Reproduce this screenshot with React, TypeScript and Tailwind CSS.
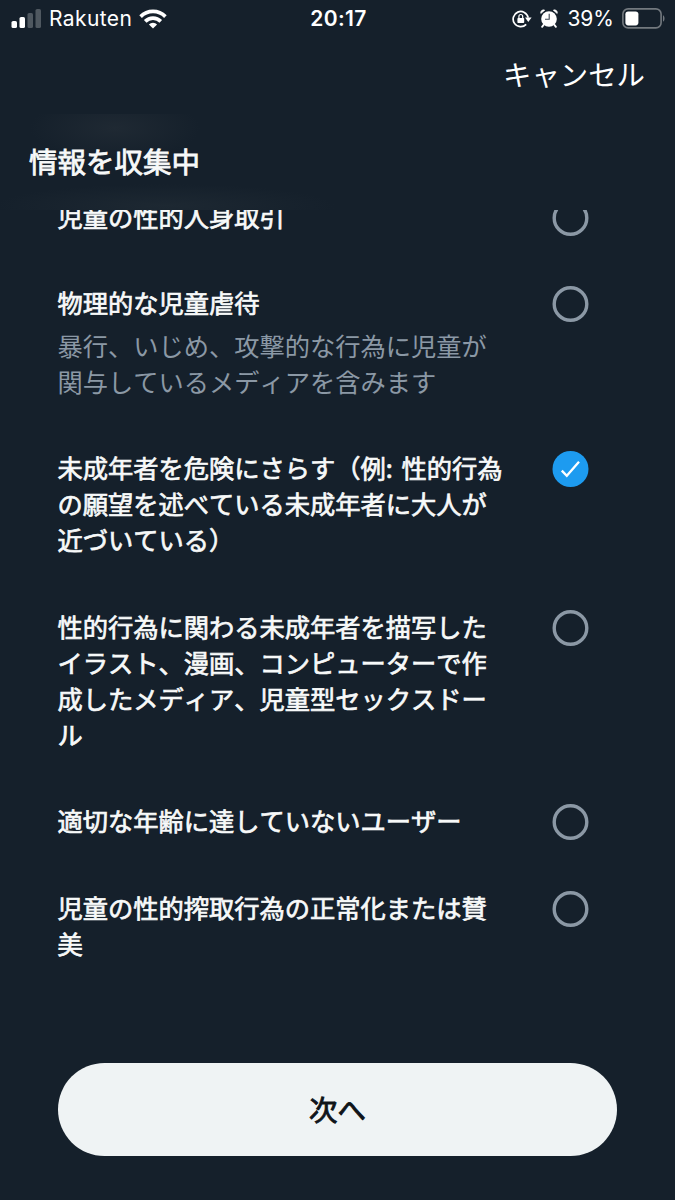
import { useState } from 'react';

interface ReportOption {
	id: string;
	label: string;
	description?: string;
}

const OPTIONS: ReportOption[] = [
	{ id: 'trafficking', label: '児童の性的人身取引' },
	{
		id: 'physical-abuse',
		label: '物理的な児童虐待',
		description: '暴行、いじめ、攻撃的な行為に児童が関与しているメディアを含みます',
	},
	{ id: 'endangering', label: '未成年者を危険にさらす（例: 性的行為の願望を述べている未成年者に大人が近づいている）' },
	{ id: 'depiction', label: '性的行為に関わる未成年者を描写したイラスト、漫画、コンピューターで作成したメディア、児童型セックスドール' },
	{ id: 'underage', label: '適切な年齢に達していないユーザー' },
	{ id: 'normalizing', label: '児童の性的搾取行為の正常化または賛美' },
];

function SignalIcon() {
	return (
		<svg width="31" height="20" viewBox="0 0 31 20" fill="#fff">
			<rect x="0.5" y="12" width="5.5" height="7" rx="1.6" />
			<rect x="8.5" y="8" width="5.5" height="11" rx="1.6" />
			<rect x="16.5" y="4" width="5.5" height="15" rx="1.6" opacity="0.25" />
			<rect x="24.5" y="0" width="5.5" height="19" rx="1.6" opacity="0.25" />
		</svg>
	);
}

function WifiIcon() {
	return (
		<svg width="28" height="20" viewBox="0 0 28 20" fill="none" stroke="#fff" strokeWidth="3.7">
			<path d="M1.6 7.6a17.5 17.5 0 0 1 24.8 0" />
			<path d="M6.2 12.4a11 11 0 0 1 15.6 0" />
			<path d="M14 19.6l-4.1-4.1a5.8 5.8 0 0 1 8.2 0z" fill="#fff" stroke="none" />
		</svg>
	);
}

function RotationLockIcon() {
	return (
		<svg width="20" height="18" viewBox="0 0 20 18" fill="none" stroke="#fff" strokeWidth="1.7">
			<path d="M16.2 7.6A7.6 7.6 0 1 0 14.2 14.4" />
			<path d="M13 7.6h6.6l-3.3 4.3z" fill="#fff" stroke="none" />
			<rect x="5.4" y="8" width="6.8" height="5" rx="0.8" fill="#fff" stroke="none" />
			<path d="M6.9 8.5V6.4a1.9 1.9 0 0 1 3.8 0v2.1" strokeWidth="1.2" />
		</svg>
	);
}

function AlarmIcon() {
	return (
		<svg width="18" height="19" viewBox="0 0 18 19">
			<circle cx="9" cy="10" r="7.8" fill="#fff" />
			<path d="M0.8 4.6A2.8 2.8 0 0 1 4.8 1.2zM17.2 4.6A2.8 2.8 0 0 0 13.2 1.2z" fill="#fff" stroke="#fff" strokeWidth="0.6" />
			<path d="M3.6 15.9l-1.5 2M14.4 15.9l1.5 2" stroke="#fff" strokeWidth="1.8" strokeLinecap="round" />
			<path d="M9.2 4.8v5.4H5" fill="none" stroke="#3d4650" strokeWidth="1.1" />
		</svg>
	);
}

function BatteryIcon() {
	return (
		<svg width="44" height="21" viewBox="0 0 44 21">
			<rect x="0.9" y="0.9" width="38.2" height="19" rx="5.2" fill="none" stroke="#73797f" strokeWidth="1.6" />
			<rect x="3.4" y="3.4" width="13" height="14" rx="2.8" fill="#fff" />
			<path d="M41 7.2c2 .8 2 5.6 0 6.4z" fill="#73797f" />
		</svg>
	);
}

function StatusBar() {
	return (
		<div className="flex h-[37px] shrink-0 items-center pl-[11px] pr-[9px] font-['Inter','Liberation_Sans',sans-serif] text-white">
			<div className="flex flex-1 items-center">
				<SignalIcon />
				<span className="ml-[7px] w-[83px] text-[21px] tracking-[0.35px]">Rakuten</span>
				<span className="ml-[7px]">
					<WifiIcon />
				</span>
			</div>
			<span className="text-[21px] font-semibold tracking-[0.4px]">20:17</span>
			<div className="flex flex-1 items-center justify-end">
				<RotationLockIcon />
				<span className="ml-2">
					<AlarmIcon />
				</span>
				<span className="ml-[9px] text-[21px]">39%</span>
				<span className="ml-2">
					<BatteryIcon />
				</span>
			</div>
		</div>
	);
}

function Radio({ checked }: Readonly<{ checked: boolean }>) {
	return (
		<svg width="37" height="36" viewBox="0 0 37 36" fill="none">
			{checked ? (
				<>
					<circle cx="18.5" cy="18" r="18" fill="#1d9bf0" />
					<path d="M9.8 19.6l5 5.2L27 10.7" stroke="#fff" strokeWidth="2.3" />
				</>
			) : (
				<circle cx="18.5" cy="18" r="16.3" stroke="#8b98a5" strokeWidth="3.4" />
			)}
		</svg>
	);
}

export default function App() {
	const [selected, setSelected] = useState('endangering');

	return (
		<div className="flex h-[1200px] w-[675px] flex-col overflow-hidden bg-[#15202b] font-['Noto_Sans_CJK_JP',sans-serif] text-[#f7f9f9] [font-kerning:none]">
			<StatusBar />

			<div className="flex h-[77px] shrink-0 items-center justify-end pb-1 pr-[30px]">
				<button type="button" className="text-[28.4px] leading-[40px] text-white">
					キャンセル
				</button>
			</div>

			<div className="flex h-24 shrink-0 items-center bg-[radial-gradient(ellipse_85px_32px_at_115px_14px,#1f2933,transparent),radial-gradient(ellipse_170px_22px_at_165px_92px,#1d2832,transparent)] pb-0.5 pl-[29px]">
				<h1 className="text-[28.5px] leading-[40px] [-webkit-text-stroke:0.8px_#f7f9f9]">情報を収集中</h1>
			</div>

			<div className="flex-1 overflow-hidden">
				<div className="-mt-[10.4px] flex flex-col gap-[50.4px] pl-[57.5px] pr-[86px]">
					{OPTIONS.map(option => (
						<button
							key={option.id}
							type="button"
							onClick={() => setSelected(option.id)}
							className="flex items-start justify-between text-left text-[25.25px] leading-[36px]"
						>
							<span className="-mt-0.5 w-[449px] pb-0.5 [word-spacing:3px]">
								<span className="block [-webkit-text-stroke:0.7px_#f7f9f9]">{option.label}</span>
								{option.description && <span className="mt-[7px] block text-[#8b98a5]">{option.description}</span>}
							</span>
							<Radio checked={selected === option.id} />
						</button>
					))}
				</div>
			</div>

			<div className="shrink-0 px-[58px] pb-[44px]">
				<button
					type="button"
					className="h-[93px] w-full rounded-full bg-[#eff3f4] text-[28.4px] text-[#0f1419] [-webkit-text-stroke:0.9px_#0f1419]"
				>
					次へ
				</button>
			</div>
		</div>
	);
}
